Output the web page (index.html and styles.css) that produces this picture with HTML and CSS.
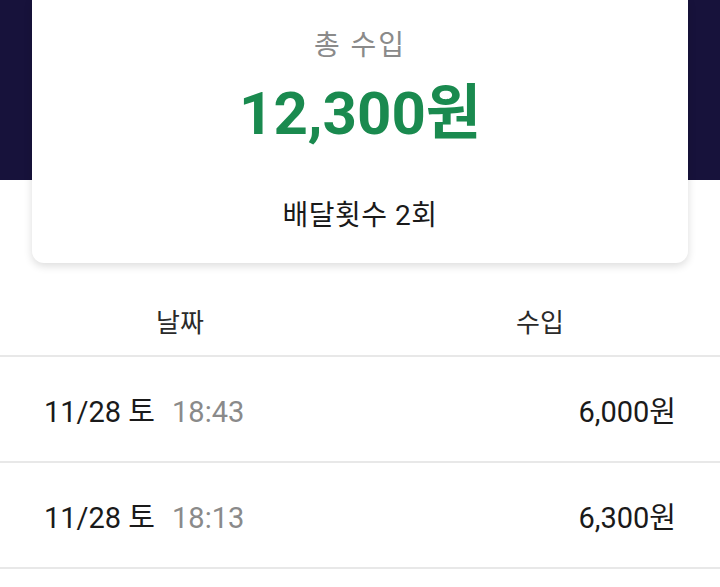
FILE: index.html
```html
<!DOCTYPE html>
<html lang="ko">
<head>
<meta charset="utf-8">
<link rel="stylesheet" href="styles.css">
</head>
<body>
<div class="top">
  <div class="card">
    <div class="card-label">총 수입</div>
    <div class="card-total">12,300원</div>
    <div class="card-count">배달횟수 2회</div>
  </div>
</div>
<div class="table">
  <div class="thead">
    <div class="th">날짜</div>
    <div class="th">수입</div>
  </div>
  <div class="row">
    <div class="date">11/28 토<span class="time">18:43</span></div>
    <div class="amount">6,000원</div>
  </div>
  <div class="row">
    <div class="date">11/28 토<span class="time">18:13</span></div>
    <div class="amount">6,300원</div>
  </div>
</div>
</body>
</html>
```
FILE: styles.css
```css
html, body {
  margin: 0;
  padding: 0;
  background: #ffffff;
}
body {
  font-family: Roboto, "Noto Sans CJK KR", sans-serif;
  color: #1a1a1a;
  width: 720px;
  height: 587px;
  overflow: hidden;
}
.top {
  background: linear-gradient(#17123b 0, #17123b 180px, #ffffff 180px);
  padding: 0 32px 22px;
}
.card {
  background: #ffffff;
  border-radius: 0 0 12px 12px;
  box-shadow: 0 3px 8px rgba(0, 0, 0, 0.14);
  height: 263px;
  display: flex;
  flex-direction: column;
  align-items: center;
}
.card-label {
  margin-top: 27px;
  font-size: 28px;
  line-height: 38px;
  color: #8a8a8a;
  letter-spacing: 2px;
}
.card-total {
  margin-top: 11px;
  font-size: 60px;
  line-height: 76px;
  font-weight: 700;
  color: #1a8a4f;
}
.card-count {
  margin-top: 45px;
  font-size: 28px;
  line-height: 38px;
  color: #1a1a1a;
  letter-spacing: 0.5px;
}
.thead {
  display: grid;
  grid-template-columns: 1fr 1fr;
  height: 70px;
  align-items: center;
  border-bottom: 2px solid #e8e8e8;
}
.th {
  text-align: center;
  font-size: 26px;
  color: #2a2a2a;
}
.row {
  display: flex;
  justify-content: space-between;
  align-items: center;
  height: 104px;
  padding: 0 44px 0 44px;
  border-bottom: 2px solid #e8e8e8;
  font-size: 29px;
}
.time {
  color: #8a8a8a;
  margin-left: 17px;
}
.amount {
  color: #1a1a1a;
}
```
